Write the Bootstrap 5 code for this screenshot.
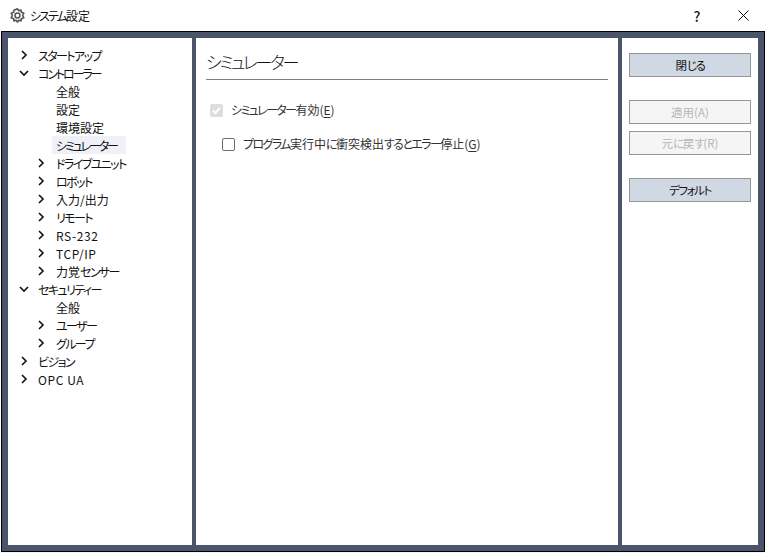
<!DOCTYPE html>
<html lang="ja"><head><meta charset="utf-8"><title>システム設定</title>
<link href="https://cdn.jsdelivr.net/npm/bootstrap@5.3.0/dist/css/bootstrap.min.css" rel="stylesheet">
<style>
html,body{height:553px;overflow:hidden;background:#f3f3f3}
body{font:12px/18px "Noto Sans CJK JP","Noto Sans",sans-serif;font-feature-settings:"palt";color:#111}
.win{width:766px;height:552px;background:#fff}
.titlebar{height:31px;padding-left:10px;background:#fff}
.titletext{margin-left:5px;padding-top:1px}
.titletext .k{letter-spacing:-1.9px}
.winbtn{width:45px;height:31px}
.qmark{font-size:14px;font-weight:500;padding-right:3px}
.frame{height:521px;margin-left:1px;width:764px;border:solid #000;border-width:1px;background:#4a556c;padding:6px;gap:4px}
.pane{background:#fff;height:507px}
.tree{width:184px;padding-top:8px}
.mid{width:422px;padding:12px 10px 0}
.side{width:136px;padding:15px 7px 0 7px}
.rowi{height:18px;white-space:nowrap;padding-top:1px}
.rowi.d-flex{padding-top:0}
.rowi.d-flex .txt{padding-top:1px}
.l0{padding-left:11px}.l1{padding-left:28px}.l2{padding-left:44px}
.chev{width:10px;height:18px;flex:none}
.l0 .chev{margin-right:9px}.l1 .chev{margin-right:10px}
.lab{padding:0 4px}
.sel{background:#eff0f8;width:74px;height:18px;margin-top:-1px;padding:1px 0 0 4px}
.k{letter-spacing:-1.6px}
.sel.k,.k.t2{letter-spacing:-2.1px}
.a{letter-spacing:.6px}
.pagehead{font-size:17px;line-height:24px;padding-bottom:5px;border-bottom:1px solid #777e86;font-weight:300}
.pagehead .k{letter-spacing:-2.3px}
.chk{width:13px;height:13px;flex:none;border:1px solid #6d6d6d;border-radius:2px;background:#fff}
.chk.off{border-color:#ddd;background:#ddd}
.opt1{margin-top:21px;padding-left:4px;gap:8px;height:18px}
.opt2{margin-top:16px;padding-left:16px;gap:8px;height:18px}
.bt{display:block;width:122px;height:24px;padding:0;border:1px solid #969696;border-radius:0;background:#d0d8e4;color:#111;font:inherit;font-size:11.5px;line-height:20px}
.bt .k{letter-spacing:-1.4px}
.bt:disabled{background:#f5f5f5;color:#b5b5b5;border-color:#969696;opacity:1}
.g1{margin-top:23px}.g2{margin-top:7px}.g3{margin-top:23px}
u{text-underline-offset:2px}
.dim{color:#333}
</style></head><body>
<div class="win">
<div class="titlebar d-flex align-items-center">
<svg width="15" height="15" viewBox="0 0 14 14" fill="none" stroke="#555" aria-hidden="true"><circle cx="7" cy="7" r="2.3" stroke-width="1.4"/><path d="M7 .8 8.2 2.6 10.3 2 10.6 4 12.9 4.8 11.8 7 12.9 9.2 10.6 10 10.3 12 8.2 11.4 7 13.2 5.8 11.4 3.7 12 3.4 10 1.1 9.2 2.2 7 1.1 4.8 3.4 4 3.7 2Z" stroke-width="1.5" stroke-linejoin="round"/></svg>
<span class="titletext"><span class="k">システム</span>設定</span>
<div class="ms-auto d-flex">
<div class="winbtn qmark d-flex align-items-center justify-content-center">?</div>
<div class="winbtn d-flex align-items-center justify-content-center"><svg width="11" height="11" viewBox="0 0 11 11" stroke="#111" aria-hidden="true"><path d="M.5.5l10 10M10.5.5l-10 10"/></svg></div>
</div></div>
<div class="frame d-flex">
<div class="pane tree">
<div class="rowi d-flex align-items-center l0"><svg class="chev" viewBox="0 0 10 18" fill="none" stroke="#111" stroke-width="1.6"><path d="M3 5l4 4-4 4"/></svg><span class="txt k">スタートアップ</span></div>
<div class="rowi d-flex align-items-center l0"><svg class="chev" viewBox="0 0 10 18" fill="none" stroke="#111" stroke-width="1.6"><path d="M1 7l4 4 4-4"/></svg><span class="txt k t2">コントローラー</span></div>
<div class="rowi l2"><span class="lab">全般</span></div>
<div class="rowi l2"><span class="lab">設定</span></div>
<div class="rowi l2"><span class="lab">環境設定</span></div>
<div class="rowi l2"><div class="sel k">シミュレーター</div></div>
<div class="rowi d-flex align-items-center l1"><svg class="chev" viewBox="0 0 10 18" fill="none" stroke="#111" stroke-width="1.6"><path d="M3 5l4 4-4 4"/></svg><span class="txt k">ドライブユニット</span></div>
<div class="rowi d-flex align-items-center l1"><svg class="chev" viewBox="0 0 10 18" fill="none" stroke="#111" stroke-width="1.6"><path d="M3 5l4 4-4 4"/></svg><span class="txt k">ロボット</span></div>
<div class="rowi d-flex align-items-center l1"><svg class="chev" viewBox="0 0 10 18" fill="none" stroke="#111" stroke-width="1.6"><path d="M3 5l4 4-4 4"/></svg><span class="txt">入力/出力</span></div>
<div class="rowi d-flex align-items-center l1"><svg class="chev" viewBox="0 0 10 18" fill="none" stroke="#111" stroke-width="1.6"><path d="M3 5l4 4-4 4"/></svg><span class="txt k">リモート</span></div>
<div class="rowi d-flex align-items-center l1"><svg class="chev" viewBox="0 0 10 18" fill="none" stroke="#111" stroke-width="1.6"><path d="M3 5l4 4-4 4"/></svg><span class="txt a">RS-232</span></div>
<div class="rowi d-flex align-items-center l1"><svg class="chev" viewBox="0 0 10 18" fill="none" stroke="#111" stroke-width="1.6"><path d="M3 5l4 4-4 4"/></svg><span class="txt a">TCP/IP</span></div>
<div class="rowi d-flex align-items-center l1"><svg class="chev" viewBox="0 0 10 18" fill="none" stroke="#111" stroke-width="1.6"><path d="M3 5l4 4-4 4"/></svg><span class="txt">力覚<span class="k">センサー</span></span></div>
<div class="rowi d-flex align-items-center l0"><svg class="chev" viewBox="0 0 10 18" fill="none" stroke="#111" stroke-width="1.6"><path d="M1 7l4 4 4-4"/></svg><span class="txt k">セキュリティー</span></div>
<div class="rowi l2"><span class="lab">全般</span></div>
<div class="rowi d-flex align-items-center l1"><svg class="chev" viewBox="0 0 10 18" fill="none" stroke="#111" stroke-width="1.6"><path d="M3 5l4 4-4 4"/></svg><span class="txt k">ユーザー</span></div>
<div class="rowi d-flex align-items-center l1"><svg class="chev" viewBox="0 0 10 18" fill="none" stroke="#111" stroke-width="1.6"><path d="M3 5l4 4-4 4"/></svg><span class="txt k">グループ</span></div>
<div class="rowi d-flex align-items-center l0"><svg class="chev" viewBox="0 0 10 18" fill="none" stroke="#111" stroke-width="1.6"><path d="M3 5l4 4-4 4"/></svg><span class="txt k">ビジョン</span></div>
<div class="rowi d-flex align-items-center l0"><svg class="chev" viewBox="0 0 10 18" fill="none" stroke="#111" stroke-width="1.6"><path d="M3 5l4 4-4 4"/></svg><span class="txt a">OPC UA</span></div>
</div>
<div class="pane mid">
<div class="pagehead"><span class="k">シミュレーター</span></div>
<div class="opt1 d-flex align-items-center"><span class="chk off d-flex align-items-center justify-content-center"><svg width="11" height="11" viewBox="0 0 11 11" fill="none" stroke="#fff" stroke-width="2" aria-hidden="true"><path d="M2 5.5l2.5 2.5L9 2.8"/></svg></span><span class="dim"><span class="k">シミュレーター</span>有効(<u>E</u>)</span></div>
<div class="opt2 d-flex align-items-center"><span class="chk"></span><span class="dim"><span class="k">プログラム</span>実行中<span class="k">に</span>衝突検出<span class="k">するとエラー</span>停止(<u>G</u>)</span></div>
</div>
<div class="pane side">
<button class="btn bt" type="button">閉<span class="k">じる</span></button>
<button class="btn bt g1" type="button" disabled>適用(A)</button>
<button class="btn bt g2" type="button" disabled>元<span class="k">に</span>戻<span class="k">す</span>(R)</button>
<button class="btn bt g3" type="button"><span class="k">デフォルト</span></button>
</div>
</div>
</div>
</body></html>
